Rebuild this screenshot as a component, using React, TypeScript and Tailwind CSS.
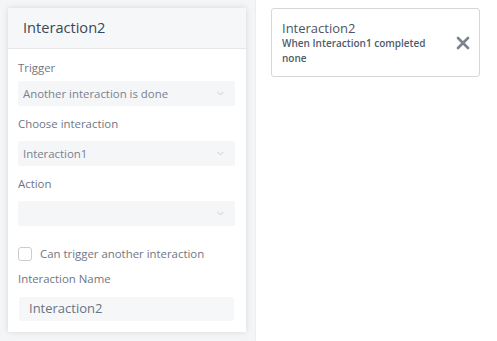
import { ChevronDown, X } from "lucide-react";

const font = { fontFamily: '"Open Sans", "Noto Sans", sans-serif' };

const Select = ({ value }: { value?: string }) => (
  <div className="flex h-[25px] w-[217px] items-center justify-between rounded-[2px] bg-[#f5f6f8] pr-[9px] pl-[5px]">
    <span className="text-[11.4px] font-medium text-[#78818f]">{value}</span>
    <ChevronDown size={11} strokeWidth={2} className="text-[#c3c7cf]" />
  </div>
);

const Label = ({ children }: { children: string }) => (
  <div className="h-[16px] text-[11.4px] leading-[16px] text-[#6f7683]">{children}</div>
);

export default function App() {
  return (
    <div className="flex h-[341px] w-[497px] bg-white" style={font}>
      <div className="h-full w-[256px] border-r border-[#eceef1] bg-[#f4f5f7] p-2">
        <div className="flex h-[324px] w-[238px] flex-col bg-white shadow-[0_0_6px_rgba(0,0,0,0.12)]">
          <div className="flex h-[41px] items-center border-b border-[#e5e7eb] bg-[#f6f7f9] px-[15px]">
            <span className="text-[14.6px] text-[#3b4758]">Interaction2</span>
          </div>
          <div className="flex flex-col px-[10px] pt-[11px]">
            <Label>Trigger</Label>
            <div className="mt-[5px]">
              <Select value="Another interaction is done" />
            </div>
            <div className="mt-[10px]">
              <Label>Choose interaction</Label>
            </div>
            <div className="mt-[9px]">
              <Select value="Interaction1" />
            </div>
            <div className="mt-[10px]">
              <Label>Action</Label>
            </div>
            <div className="mt-[9px]">
              <Select />
            </div>
            <div className="mt-[19px] flex items-center gap-[8px]">
              <div className="h-[14px] w-[14px] rounded-[3px] border border-[#c9cdd3] bg-white" />
              <span className="text-[11.4px] text-[#6f7683]">Can trigger another interaction</span>
            </div>
            <div className="mt-[9px]">
              <Label>Interaction Name</Label>
            </div>
            <div className="mt-[10px] ml-[1px] flex h-[24px] w-[215px] items-center rounded-[2px] bg-[#f5f7f9] px-[10px]">
              <span className="text-[13px] text-[#6a7382]">Interaction2</span>
            </div>
          </div>
        </div>
      </div>
      <div className="flex-1 pt-2 pl-[15px]">
        <div className="flex h-[69px] w-[209px] items-center justify-between rounded-[3px] border border-[#d4d7dc] pr-[6px] pl-[10px]">
          <div className="flex flex-col">
            <span className="text-[13px] leading-[16px] text-[#4a5566]">Interaction2</span>
            <span className="text-[10px] leading-[15px] font-semibold text-[#505b6b]">
              When Interaction1 completed
            </span>
            <span className="text-[10px] leading-[15px] font-semibold text-[#505b6b]">none</span>
          </div>
          <X size={20} strokeWidth={3.2} className="text-[#7d8490]" />
        </div>
      </div>
    </div>
  );
}
